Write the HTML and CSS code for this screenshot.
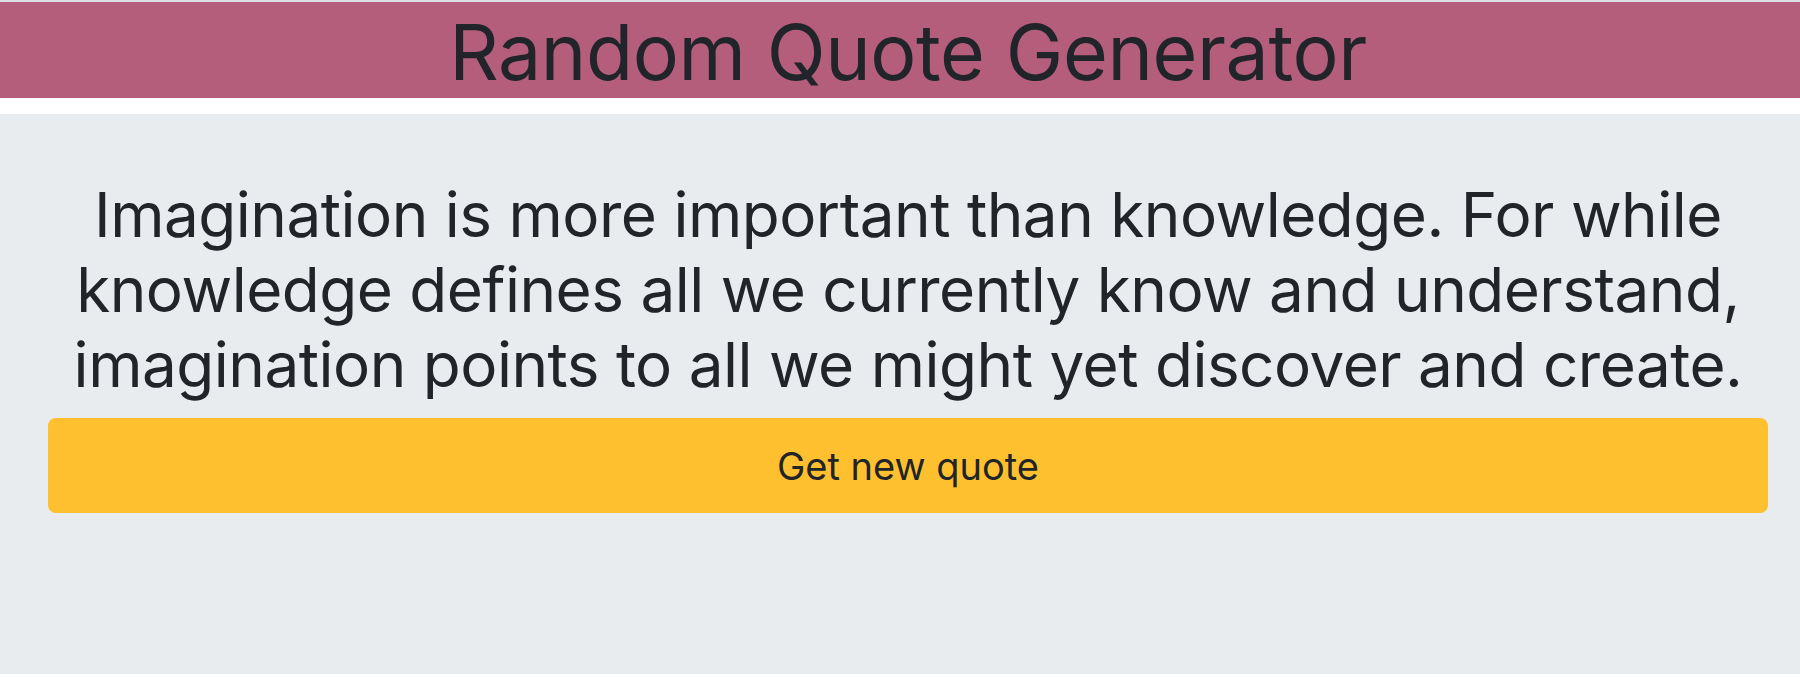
FILE: index.html
```html
<!DOCTYPE html>
<html lang="en">
<head>
<meta charset="utf-8">
<title>Random Quote Generator</title>
<link rel="stylesheet" href="styles.css">
</head>
<body>
<div class="page">
  <header class="site-header">
    <h1 class="site-title">Random Quote Generator</h1>
  </header>
  <main class="quote-panel">
    <p class="quote-text">Imagination is more important than knowledge. For while knowledge defines all we currently know and understand, imagination points to all we might yet discover and create.</p>
    <button class="quote-button" type="button">Get new quote</button>
  </main>
</div>
</body>
</html>
```
FILE: styles.css
```css
html, body {
  margin: 0;
  padding: 0;
  background: #ffffff;
  overflow: hidden;
}
body {
  font-family: Inter, "Noto Sans", sans-serif;
  color: #212529;
}
.page {
  width: calc(100% + 16px);
  border-top: 2px solid #dcdfe2;
  display: flex;
  flex-direction: column;
  gap: 16px;
}
.site-header {
  background: #b55e7b;
  height: 96px;
  padding-top: 4px;
  box-sizing: border-box;
  text-align: center;
}
.site-title {
  margin: 0;
  font-size: 77px;
  font-weight: 400;
  line-height: 92px;
  letter-spacing: -0.4px;
}
.quote-panel {
  background: #e9ecef;
  height: 560px;
  box-sizing: border-box;
  padding: 63px 48px 0;
  display: flex;
  flex-direction: column;
  align-items: stretch;
}
.quote-text {
  margin: 0 0 16px;
  font-size: 62px;
  font-weight: 430;
  line-height: 75px;
  letter-spacing: -0.5px;
  text-align: center;
}
.quote-button {
  height: 95px;
  border: none;
  border-radius: 8px;
  background: #fec02f;
  color: #212529;
  font-family: Inter, "Noto Sans", sans-serif;
  font-size: 38px;
  padding: 0;
}
```
